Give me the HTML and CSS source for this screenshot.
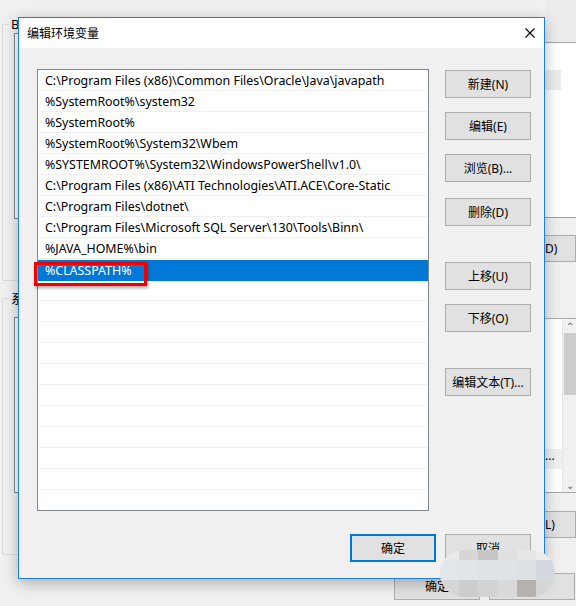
FILE: index.html
```html
<!DOCTYPE html>
<html lang="zh-CN">
<head>
<meta charset="utf-8">
<title>编辑环境变量</title>
<link rel="stylesheet" href="styles.css">
</head>
<body>
<div class="screen">
  <div class="backwin">
    <div class="back-left">
      <div class="group g1"><span class="glabel">B</span><div class="blist bl1"></div></div>
      <div class="group g2"><span class="glabel">系</span><div class="blist bl2"></div></div>
    </div>
    <div class="back-right">
      <div class="br-top"></div>
      <div class="br-list1"><div class="br-sel"></div></div>
      <div class="br-btn b-d">D)</div>
      <div class="br-list2">
        <div class="br-cell">...</div>
        <div class="br-scroll"><span class="sarrow">&#8963;</span><div class="thumb"></div><span class="sarrow down">&#8964;</span></div>
      </div>
      <div class="br-btn b-l">L)</div>
    </div>
    <div class="back-footer">
      <div class="bbtn">确定</div>
      <div class="bbtn">取消</div>
    </div>
  </div>

  <div class="dialog">
    <div class="titlebar">
      <span class="title">编辑环境变量</span>
      <svg class="close" width="10" height="10" viewBox="0 0 10 10"><path d="M0.5 0.5 L9.5 9.5 M9.5 0.5 L0.5 9.5" stroke="#000" stroke-width="1.1" fill="none"/></svg>
    </div>
    <div class="dbody">
      <div class="content">
        <div class="list">
          <div class="row">C:\Program Files (x86)\Common Files\Oracle\Java\javapath</div>
          <div class="row">%SystemRoot%\system32</div>
          <div class="row">%SystemRoot%</div>
          <div class="row">%SystemRoot%\System32\Wbem</div>
          <div class="row">%SYSTEMROOT%\System32\WindowsPowerShell\v1.0\</div>
          <div class="row">C:\Program Files (x86)\ATI Technologies\ATI.ACE\Core-Static</div>
          <div class="row">C:\Program Files\dotnet\</div>
          <div class="row">C:\Program Files\Microsoft SQL Server\130\Tools\Binn\</div>
          <div class="row">%JAVA_HOME%\bin</div>
          <div class="row sel">%CLASSPATH%</div>
          <div class="row"></div>
          <div class="row"></div>
          <div class="row"></div>
          <div class="row"></div>
          <div class="row"></div>
          <div class="row"></div>
          <div class="row"></div>
          <div class="row"></div>
          <div class="row"></div>
          <div class="row"></div>
          <div class="row"></div>
        </div>
        <div class="side">
          <div class="btn">新建(N)</div>
          <div class="btn s2">编辑(E)</div>
          <div class="btn s3">浏览(B)...</div>
          <div class="btn s4">删除(D)</div>
          <div class="btn s5">上移(U)</div>
          <div class="btn s6">下移(O)</div>
          <div class="btn s7">编辑文本(T)...</div>
        </div>
      </div>
      <div class="footer">
        <div class="btn default">确定</div>
        <div class="btn">取消</div>
      </div>
    </div>
  </div>

  <div class="callout"></div>
  <div class="smudge">
    <div class="sm-row r1"><i style="background:#e9e9e9"></i><i style="background:#d8d6d4"></i><i style="background:#c6c6c6"></i><i style="background:#e0e0e0"></i><i style="background:#e6e6e6"></i><i style="background:#ececec"></i></div>
    <div class="sm-row r2"><i style="background:#e3e6e9"></i><i style="background:#e2e5e8"></i><i style="background:#e0e3e6"></i><i style="background:#dfe3e7"></i><i style="background:#dde1e5"></i><i style="background:#d3d9de"></i></div>
    <div class="sm-row r3"><i style="background:#d6d6d6"></i><i style="background:#cdcdcd"></i><i style="background:#d3d3d3"></i><i style="background:#d9d9d9"></i><i style="background:#b4b1af"></i><i style="background:#d6d6d6"></i></div>
  </div>
</div>
</body>
</html>
```

FILE: styles.css
```css
* { box-sizing: border-box; }
html, body { margin: 0; padding: 0; }
body {
  width: 576px; height: 606px; overflow: hidden;
  background: #f0f0f0;
  font-family: "Noto Sans", "Noto Sans CJK SC", sans-serif;
  font-size: 12px; color: #000;
}
.screen { position: relative; width: 576px; height: 606px; overflow: hidden; }

/* background window */
.backwin { position: absolute; inset: 0; background: #f0f0f0; }
.back-left { position: absolute; left: 2px; top: 24px; width: 40px; }
.group { position: relative; border: 1px solid #dcdcdc; }
.g1 { height: 257px; }
.g2 { height: 257px; margin-top: 17px; }
.glabel { position: absolute; left: 6px; top: -9px; background: #f0f0f0; padding: 0 2px; line-height: 16px; font-size: 13px; }
.blist { border: 1px solid #828790; background: #fff; margin-left: 11px; }
.bl1 { margin-top: 8px; height: 186px; }
.bl2 { margin-top: 18px; height: 176px; }

.back-right { position: absolute; left: 545px; top: 0; width: 31px; height: 579px; display: flex; flex-direction: column; }
.br-top { height: 43px; background: #ececec; border-bottom: 1px solid #a8a8a8; }
.br-list1 { height: 175px; background: #fff; border-bottom: 1px solid #a0a0a0; padding-top: 27px; }
.br-sel { height: 20px; background: #ececec; width: 16px; }
.br-btn { height: 27px; background: #e1e1e1; border: 1px solid #adadad; border-left: none; line-height: 25px; font-size: 12px; }
.b-d { margin-top: 17px; }
.br-list2 { margin-top: 56px; height: 175px; background: #fff; border-top: 1px solid #ababab; border-bottom: 1px solid #ababab; display: flex; position: relative; }
.br-cell { position: absolute; left: 0; top: 130px; width: 17px; height: 20px; background: #f0f0f0; line-height: 14px; }
.br-scroll { margin-left: auto; width: 14px; background: #f0f0f0; border-left: 1px solid #e6e6e6; display: flex; flex-direction: column; align-items: center; }
.sarrow { font-size: 10px; line-height: 14px; height: 14px; color: #606060; }
.thumb { width: 12px; height: 62px; background: #cdcdcd; }
.sarrow.down { margin-top: auto; }
.b-l { margin-top: 18px; }

.back-footer { position: absolute; left: 394px; top: 573px; display: flex; gap: 9px; }
.bbtn { width: 86px; height: 27px; background: #e1e1e1; border: 1px solid #adadad; text-align: center; line-height: 25px; }

/* dialog */
.dialog {
  position: absolute; left: 18px; top: 17px; width: 527px; height: 562px;
  border: 1px solid #1a82d8; background: #f0f0f0;
  box-shadow: 0 4px 14px rgba(0,0,0,0.28);
  display: flex; flex-direction: column;
}
.titlebar { height: 30px; background: #fff; display: flex; align-items: center; padding: 0 9px 0 8px; }
.title { font-size: 12px; line-height: 16px; padding-top: 1px; }
.close { margin-left: auto; margin-right: 0; }
.dbody { flex: 1; padding: 21px 13px 0 18px; display: flex; flex-direction: column; }
.content { display: flex; gap: 16px; }
.list { width: 392px; height: 442px; border: 1px solid #828790; background: #fff; overflow: hidden; }
.row {
  height: 21px; line-height: 21px; padding-left: 6px; white-space: nowrap;
  border-bottom: 1px solid #f0f0f0; margin: 0 1px; font-size: 12.4px;
}
.row.sel { background: #0078d7; color: #fff; margin: 1px 0 -1px; padding-left: 7px; border-bottom-color: #0078d7; }
.side { display: flex; flex-direction: column; padding-top: 1px; }
.btn {
  width: 86px; height: 28px; background: #e1e1e1; border: 1px solid #adadad;
  display: flex; align-items: center; justify-content: center; font-size: 12px;
}
.s2 { margin-top: 14px; }
.s3 { margin-top: 14px; }
.s4 { margin-top: 16px; }
.s5 { margin-top: 36px; }
.s6 { margin-top: 14px; }
.s7 { margin-top: 36px; }
.footer { display: flex; justify-content: flex-end; gap: 9px; margin-top: 23px; }
.btn.default { border: 2px solid #0078d7; }

/* annotation */
.callout {
  position: absolute; left: 34px; top: 262px; width: 113px; height: 24px;
  border: 3px solid #f20000; box-shadow: 1px 2px 3px rgba(0,0,0,0.35);
}
.smudge {
  position: absolute; left: 440px; top: 550px; width: 115px; height: 47px;
  border-radius: 24px; overflow: hidden; display: flex; flex-direction: column;
}
.sm-row { display: flex; }
.sm-row i { flex: 1; }
.r1 { height: 10px; }
.r2 { height: 20px; }
.r3 { height: 17px; }
```
